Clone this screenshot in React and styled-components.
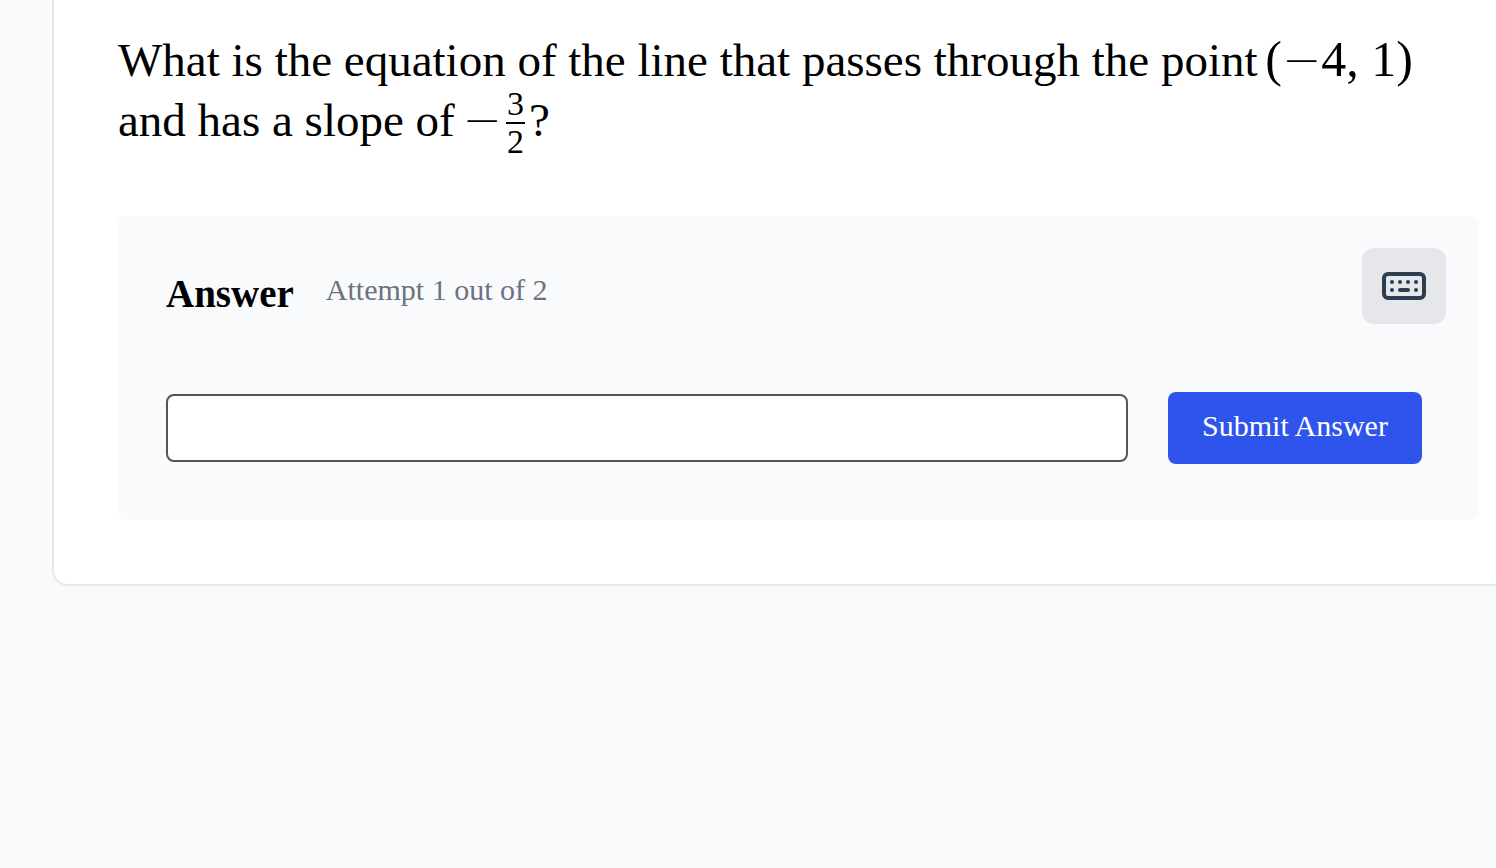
import React, { useState } from "react";
import styled, { createGlobalStyle } from "styled-components";

const GlobalStyle = createGlobalStyle`
  * {
    box-sizing: border-box;
  }
  body {
    margin: 0;
    background-color: #f9fafc;
    color: #000;
    font-family: Georgia, "Liberation Serif", serif;
    overflow-x: hidden;
  }
`;

const Page = styled.main`
  padding-left: 52px;
  overflow: hidden;
`;

const Card = styled.section`
  margin-right: -48px;
  padding: 30px 64px 64px;
  background-color: #fff;
  border: 2px solid #e5e7eb;
  border-top: 0;
  border-radius: 0 0 16px 16px;
`;

const Question = styled.h1`
  margin: 0 0 64px;
  font-size: 47px;
  font-weight: 400;
  line-height: 60px;
`;

const MathText = styled.span`
  margin-left: -4px;
  font-family: "Liberation Serif", serif;
  font-size: 50px;
  line-height: 1;
  white-space: nowrap;
`;

const Minus = styled.span`
  font-family: "DejaVu Sans", sans-serif;
  font-size: 47px;
  font-weight: 200;
  line-height: 0;
`;

const Fraction = styled.span`
  display: inline-flex;
  flex-direction: column;
  align-items: center;
  margin: -10px 4px -6px;
  font-size: 34px;
  line-height: 32px;
  vertical-align: middle;
`;

const Numerator = styled.span`
  height: 36px;
  padding: 0 1px;
  border-bottom: 2px solid #000;
`;

const Denominator = styled.span`
  height: 34px;
  padding-top: 2px;
`;

const AnswerPanel = styled.form`
  padding: 32px 32px 56px 48px;
  background-color: #f9fafc;
  border-radius: 8px;
`;

const PanelHeader = styled.div`
  display: flex;
  align-items: center;
  gap: 32px;
  margin-bottom: 68px;
`;

const AnswerLabel = styled.label`
  font-size: 39px;
  font-weight: 700;
  line-height: 60px;
  padding-top: 16px;
`;

const Attempt = styled.span`
  color: #6b7280;
  font-size: 30px;
  line-height: 60px;
  padding-top: 8px;
`;

const KeyboardButton = styled.button`
  display: flex;
  justify-content: center;
  align-items: center;
  width: 84px;
  height: 76px;
  margin-left: auto;
  padding: 0;
  background-color: #e5e7eb;
  border: 0;
  border-radius: 12px;
  color: #2c3e50;
  cursor: pointer;
`;

const AnswerRow = styled.div`
  display: flex;
  align-items: center;
  gap: 40px;
  padding-right: 24px;
`;

const AnswerInput = styled.input`
  flex: 1;
  min-width: 0;
  height: 68px;
  padding: 0 16px;
  background-color: #fff;
  border: 2px solid #555;
  border-radius: 8px;
  font-family: inherit;
  font-size: 30px;
`;

const SubmitButton = styled.button`
  min-width: 254px;
  height: 72px;
  padding: 0 32px 4px;
  background-color: #2f54eb;
  border: 0;
  border-radius: 8px;
  color: #fff;
  font-family: inherit;
  font-size: 30px;
  cursor: pointer;
`;

const KeyboardIcon = () => (
  <svg width="44" height="28" viewBox="0 0 44 28" fill="none" aria-hidden="true">
    <rect x="2" y="2" width="40" height="24" rx="4" stroke="currentColor" strokeWidth="4" />
    <path
      d="M10 10h.01M18 10h.01M26 10h.01M34 10h.01M10 18h.01M18 18h8M34 18h.01"
      stroke="currentColor"
      strokeWidth="4"
      strokeLinecap="round"
    />
  </svg>
);

export default function App() {
  const [answer, setAnswer] = useState("");

  return (
    <>
      <GlobalStyle />
      <Page>
        <Card>
          <Question>
            What is the equation of the line that passes through the point{" "}
            <MathText>
              (<Minus>−</Minus>4, 1)
            </MathText>{" "}
            and has a slope of{" "}
            <MathText>
              <Minus>−</Minus>
              <Fraction>
                <Numerator>3</Numerator>
                <Denominator>2</Denominator>
              </Fraction>
            </MathText>
            ?
          </Question>
          <AnswerPanel onSubmit={e => e.preventDefault()}>
            <PanelHeader>
              <AnswerLabel htmlFor="answer">Answer</AnswerLabel>
              <Attempt>Attempt 1 out of 2</Attempt>
              <KeyboardButton type="button" aria-label="Keyboard">
                <KeyboardIcon />
              </KeyboardButton>
            </PanelHeader>
            <AnswerRow>
              <AnswerInput
                id="answer"
                type="text"
                autoComplete="off"
                value={answer}
                onChange={e => setAnswer(e.target.value)}
              />
              <SubmitButton type="submit">Submit Answer</SubmitButton>
            </AnswerRow>
          </AnswerPanel>
        </Card>
      </Page>
    </>
  );
}
